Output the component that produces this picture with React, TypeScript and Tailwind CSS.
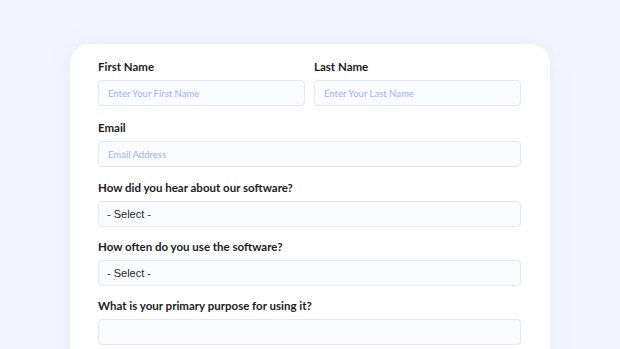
import React from 'react';

const labelCls = "block text-[11.5px] leading-4 font-bold text-[#1c1c24] mb-[5px]";
const inputCls =
  "block w-full h-[26px] rounded-[4px] border border-[#e4e8f0] bg-[#f9fbfe] px-[9px] text-[9.5px] text-[#333] placeholder:text-[#a3b2ec] outline-none";

function Field({ label, placeholder, className }: { label: string; placeholder?: string; className?: string }) {
  return (
    <div className={className}>
      <label className={labelCls}>{label}</label>
      <input className={inputCls} placeholder={placeholder} />
    </div>
  );
}

function SelectField({ label, className }: { label: string; className?: string }) {
  return (
    <div className={className}>
      <label className={labelCls}>{label}</label>
      <div className="w-full h-[26px] rounded-[4px] border border-[#e4e8f0] bg-[#f9fbfe] px-[8px] flex items-center text-[11px] text-[#2a2a2a] [font-family:'Liberation_Sans',Arial,sans-serif]">
        - Select -
      </div>
    </div>
  );
}

export default function App() {
  return (
    <main className="w-[620px] h-[349px] overflow-hidden bg-[#f2f5fd] [font-family:Lato,'Noto_Sans',sans-serif]">
      <div className="mx-auto mt-[44px] w-[480px] h-[400px] bg-white rounded-[20px] shadow-[0_0_20px_rgba(180,190,230,0.15)] pl-[28px] pt-[15px]">
        {/* Name row */}
        <div className="grid grid-cols-2 gap-[9px] mb-[14px] w-[423px]">
          <Field label="First Name" placeholder="Enter Your First Name" />
          <Field label="Last Name" placeholder="Enter Your Last Name" />
        </div>

        <div className="w-[423px]">
          <Field label="Email" placeholder="Email Address" className="mb-[13px]" />
          <SelectField label="How did you hear about our software?" className="mb-[12px]" />
          <SelectField label="How often do you use the software?" className="mb-[12px]" />
          <Field label="What is your primary purpose for using it?" />
        </div>
      </div>
    </main>
  );
}
